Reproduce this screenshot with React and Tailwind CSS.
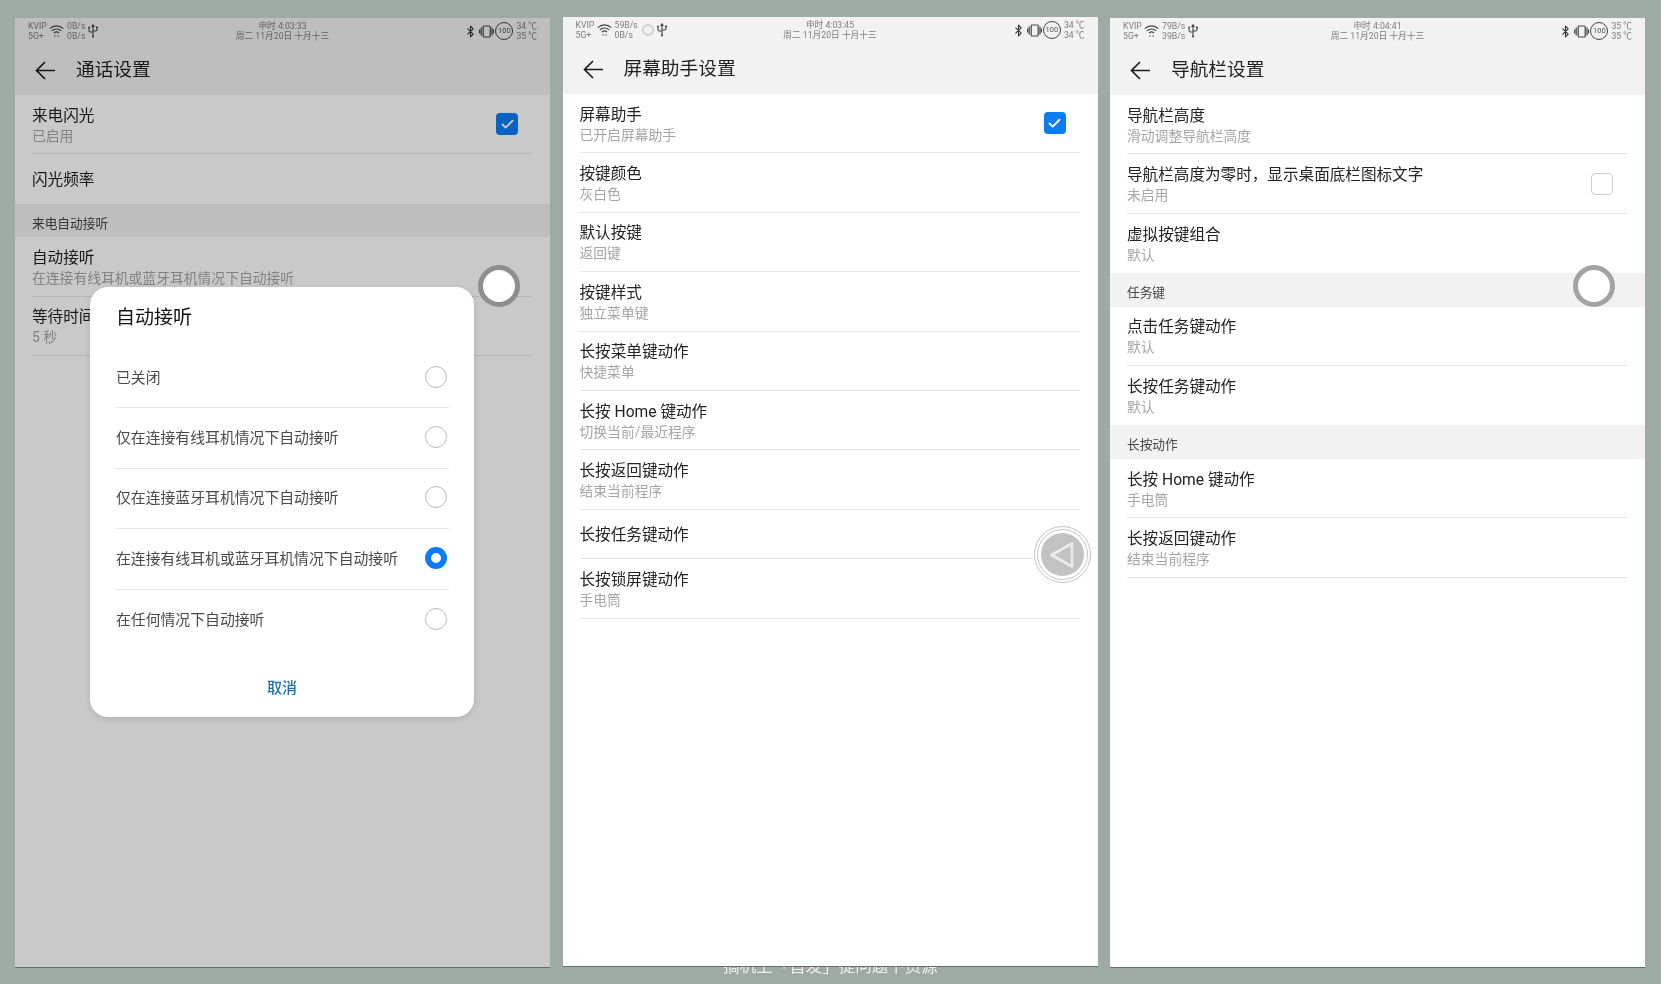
import { Bluetooth, Check } from 'lucide-react'

function WifiIcon() {
  return (
    <svg width="15" height="14" viewBox="0 0 15 14" fill="none" stroke="currentColor" strokeWidth="1.1">
      <path d="M.8 4.6C4.5 1 10.5 1 14.2 4.6" />
      <path d="M2.8 6.8c2.6-2.5 6.8-2.5 9.4 0" />
      <path d="M5 9c1.4-1.3 3.6-1.3 5 0" />
      <circle cx="6" cy="12" r=".7" fill="currentColor" stroke="none" />
      <circle cx="9" cy="12" r=".7" fill="currentColor" stroke="none" />
    </svg>
  )
}

function UsbIcon() {
  return (
    <svg width="10" height="14" viewBox="0 0 10 14" fill="none" stroke="currentColor" strokeWidth="1.1">
      <path d="M5 1.5V13" />
      <path d="M4 2.5L5 .8L6 2.5Z" fill="currentColor" />
      <path d="M1 4v2.5c0 1 .8 1.5 1.5 1.5H5" />
      <path d="M9 4v1.5c0 1-.8 1.5-1.5 1.5H5" />
      <circle cx="1" cy="3.4" r=".9" fill="currentColor" stroke="none" />
      <rect x="8" y="2.6" width="2" height="1.6" fill="currentColor" stroke="none" />
      <circle cx="5" cy="12.6" r="1" fill="currentColor" stroke="none" />
    </svg>
  )
}

function VibrateIcon() {
  return (
    <svg width="15" height="13" viewBox="0 0 15 13" fill="none" stroke="currentColor" strokeWidth="1.2">
      <rect x="4.2" y="1" width="7" height="11" rx="1" />
      <path d="M2.2 2.5v8M.6 4.5v4M13 2.5v8M14.5 4.5v4" />
    </svg>
  )
}

function BackArrow() {
  return (
    <svg width="20" height="19" viewBox="0 0 20 19" fill="none" stroke="#1c1c1c" strokeWidth="1.7">
      <path d="M20 9.5H1.5M10 1L1.5 9.5L10 18" />
    </svg>
  )
}

function StatusBar({ speedUp, speedDown, time, date, tempA, tempB, dot }) {
  return (
    <div className="grid grid-cols-[1fr_auto_1fr] px-[13px] pt-[3px] text-[8.7px] leading-[10px] text-[#7c7c7c]">
      <div className="flex items-center">
        <div className="w-[21px]">
          <p>KVIP</p>
          <p>5G+</p>
        </div>
        <span className="w-[18px] text-[#444]"><WifiIcon /></span>
        <div>
          <p>{speedUp}</p>
          <p>{speedDown}</p>
        </div>
        {dot && <span className="ml-[4px] w-[12px] h-[12px] rounded-full border-2 border-[#cfcfcf]" />}
        <span className="ml-[3px] text-[#444]"><UsbIcon /></span>
      </div>
      <div className="text-center">
        <p>{time}</p>
        <p>{date}</p>
      </div>
      <div className="flex items-center justify-end">
        <Bluetooth size={13} strokeWidth={2} className="text-[#333]" />
        <span className="ml-[2px] text-[#444]"><VibrateIcon /></span>
        <span className="ml-[1px] w-[18px] h-[18px] rounded-full border border-[#444] flex items-center justify-center text-[7.5px] text-[#555]">100</span>
        <div className="ml-[3px]">
          <p>{tempA}</p>
          <p>{tempB}</p>
        </div>
      </div>
    </div>
  )
}

function Header({ title, status }) {
  return (
    <div className="h-[77px] bg-[#f2f2f2]">
      <StatusBar {...status} />
      <div className="flex items-center h-[40px] mt-[9px] pl-[20px]">
        <BackArrow />
        <h1 className="ml-[21px] text-[18.7px] leading-[26px] text-[#1f1f1f]">{title}</h1>
      </div>
    </div>
  )
}

function Row({ title, sub, check, last }) {
  return (
    <div className={`flex items-center ml-[17px] mr-[18px] ${sub ? 'h-[59.4px]' : 'h-[49.5px]'} ${last ? '' : 'border-b border-[#e6e6e6]'}`}>
      <div className={`flex-1 ${sub ? 'pt-[3px]' : 'pt-[2px]'}`}>
        <p className="text-[15.6px] leading-[20px] text-[#222]">{title}</p>
        {sub && <p className="text-[13.8px] leading-[20px] text-[#a6a6a6]">{sub}</p>}
      </div>
      {check === true && (
        <span className="mr-[14px] w-[22px] h-[22px] rounded-[4px] bg-[#0a7df5] flex items-center justify-center">
          <Check size={15} strokeWidth={3} className="text-white" />
        </span>
      )}
      {check === false && <span className="mr-[14px] w-[22px] h-[22px] rounded-[4px] border border-[#cfcfcf]" />}
    </div>
  )
}

function Section({ title }) {
  return (
    <div className="h-[33.5px] bg-[#f2f2f2] pl-[17px] pt-[10px] text-[12.7px] leading-[20px] text-[#444]">{title}</div>
  )
}

const dialogOptions = [
  '已关闭',
  '仅在连接有线耳机情况下自动接听',
  '仅在连接蓝牙耳机情况下自动接听',
  '在连接有线耳机或蓝牙耳机情况下自动接听',
  '在任何情况下自动接听',
]

function Dialog() {
  return (
    <div className="absolute left-[75px] top-[269px] w-[384px] h-[430px] rounded-[18px] bg-white shadow-[0_2px_6px_rgba(0,0,0,0.12)]">
      <div className="h-[61px] pl-[26px] pt-[17px] text-[19px] leading-[28px] text-[#111]">自动接听</div>
      <div className="ml-[26px] mr-[25px]">
        {dialogOptions.map((opt, i) => (
          <div key={i} className={`flex items-center justify-between h-[60.4px] pr-[2px] ${i < 4 ? 'border-b border-[#e4e4e4]' : ''}`}>
            <span className="text-[14.85px] text-[#4a4a4a]">{opt}</span>
            {i === 3 ? (
              <span className="mb-[2px] w-[22px] h-[22px] rounded-full border-[6px] border-[#0a7df5]" />
            ) : (
              <span className="mb-[2px] w-[22px] h-[22px] rounded-full border border-[#bcbcbc]" />
            )}
          </div>
        ))}
      </div>
      <div className="mt-[20px] text-center text-[15px] leading-[36px] font-medium text-[#1f6fae]">取消</div>
    </div>
  )
}

function FloatingBack() {
  return (
    <div className="absolute left-[471px] top-[509px] w-[57px] h-[57px] rounded-full border border-[#c4c4c4] bg-white p-[2px]">
      <div className="w-full h-full rounded-full border border-[#c4c4c4] p-[3px]">
        <div className="w-full h-full rounded-full bg-[#c2c2c2] flex items-center justify-center">
          <svg width="26" height="28" viewBox="0 0 26 28" fill="none" stroke="#ececec" strokeWidth="2.6" strokeLinejoin="round">
            <path d="M23 2.5V25.5L2.5 14Z" />
          </svg>
        </div>
      </div>
    </div>
  )
}

function Panel({ children, className = '' }) {
  return (
    <div className={`relative z-10 w-[535px] h-[950px] bg-white border-b border-[#666c69] overflow-hidden ${className}`}>
      {children}
    </div>
  )
}

export default function App() {
  return (
    <div className="w-[1661px] h-[984px] overflow-hidden bg-[#a0aaa4] pt-[17px] blur-[0.35px] font-['Roboto','Noto_Sans_CJK_SC',sans-serif]">
      <div className="flex gap-[12.5px] pl-[15px]">
        <Panel className="mt-px">
          <Header
            title="通话设置"
            status={{ speedUp: '0B/s', speedDown: '0B/s', time: '申时 4:03:33', date: '周二 11月20日 十月十三', tempA: '34 ℃', tempB: '35 ℃' }}
          />
          <Row title="来电闪光" sub="已启用" check={true} />
          <Row title="闪光频率" last />
          <Section title="来电自动接听" />
          <Row title="自动接听" sub="在连接有线耳机或蓝牙耳机情况下自动接听" />
          <Row title="等待时间" sub="5 秒" />
          <div className="absolute inset-0 bg-black/[0.21]" />
          <Dialog />
          <span className="absolute left-[463px] top-[247px] w-[42px] h-[42px] rounded-full bg-white border-[5px] border-[#8e8e8e]" />
        </Panel>

        <Panel>
          <Header
            title="屏幕助手设置"
            status={{ speedUp: '59B/s', speedDown: '0B/s', dot: true, time: '申时 4:03:45', date: '周二 11月20日 十月十三', tempA: '34 ℃', tempB: '34 ℃' }}
          />
          <Row title="屏幕助手" sub="已开启屏幕助手" check={true} />
          <Row title="按键颜色" sub="灰白色" />
          <Row title="默认按键" sub="返回键" />
          <Row title="按键样式" sub="独立菜单键" />
          <Row title="长按菜单键动作" sub="快捷菜单" />
          <Row title="长按 Home 键动作" sub="切换当前/最近程序" />
          <Row title="长按返回键动作" sub="结束当前程序" />
          <Row title="长按任务键动作" />
          <Row title="长按锁屏键动作" sub="手电筒" />
          <FloatingBack />
        </Panel>

        <Panel className="mt-px">
          <Header
            title="导航栏设置"
            status={{ speedUp: '79B/s', speedDown: '39B/s', time: '申时 4:04:41', date: '周二 11月20日 十月十三', tempA: '35 ℃', tempB: '35 ℃' }}
          />
          <Row title="导航栏高度" sub="滑动调整导航栏高度" />
          <Row title="导航栏高度为零时，显示桌面底栏图标文字" sub="未启用" check={false} />
          <Row title="虚拟按键组合" sub="默认" last />
          <Section title="任务键" />
          <Row title="点击任务键动作" sub="默认" />
          <Row title="长按任务键动作" sub="默认" last />
          <Section title="长按动作" />
          <Row title="长按 Home 键动作" sub="手电筒" />
          <Row title="长按返回键动作" sub="结束当前程序" />
          <span className="absolute left-[463px] top-[247px] w-[42px] h-[42px] rounded-full bg-white border-[5px] border-[#a3a3a3]" />
        </Panel>
      </div>
      <p className="-mt-[11px] text-center text-[16.5px] leading-[20px] text-[#eef1ef]">搞机上「首发」提问题下资源</p>
    </div>
  )
}
